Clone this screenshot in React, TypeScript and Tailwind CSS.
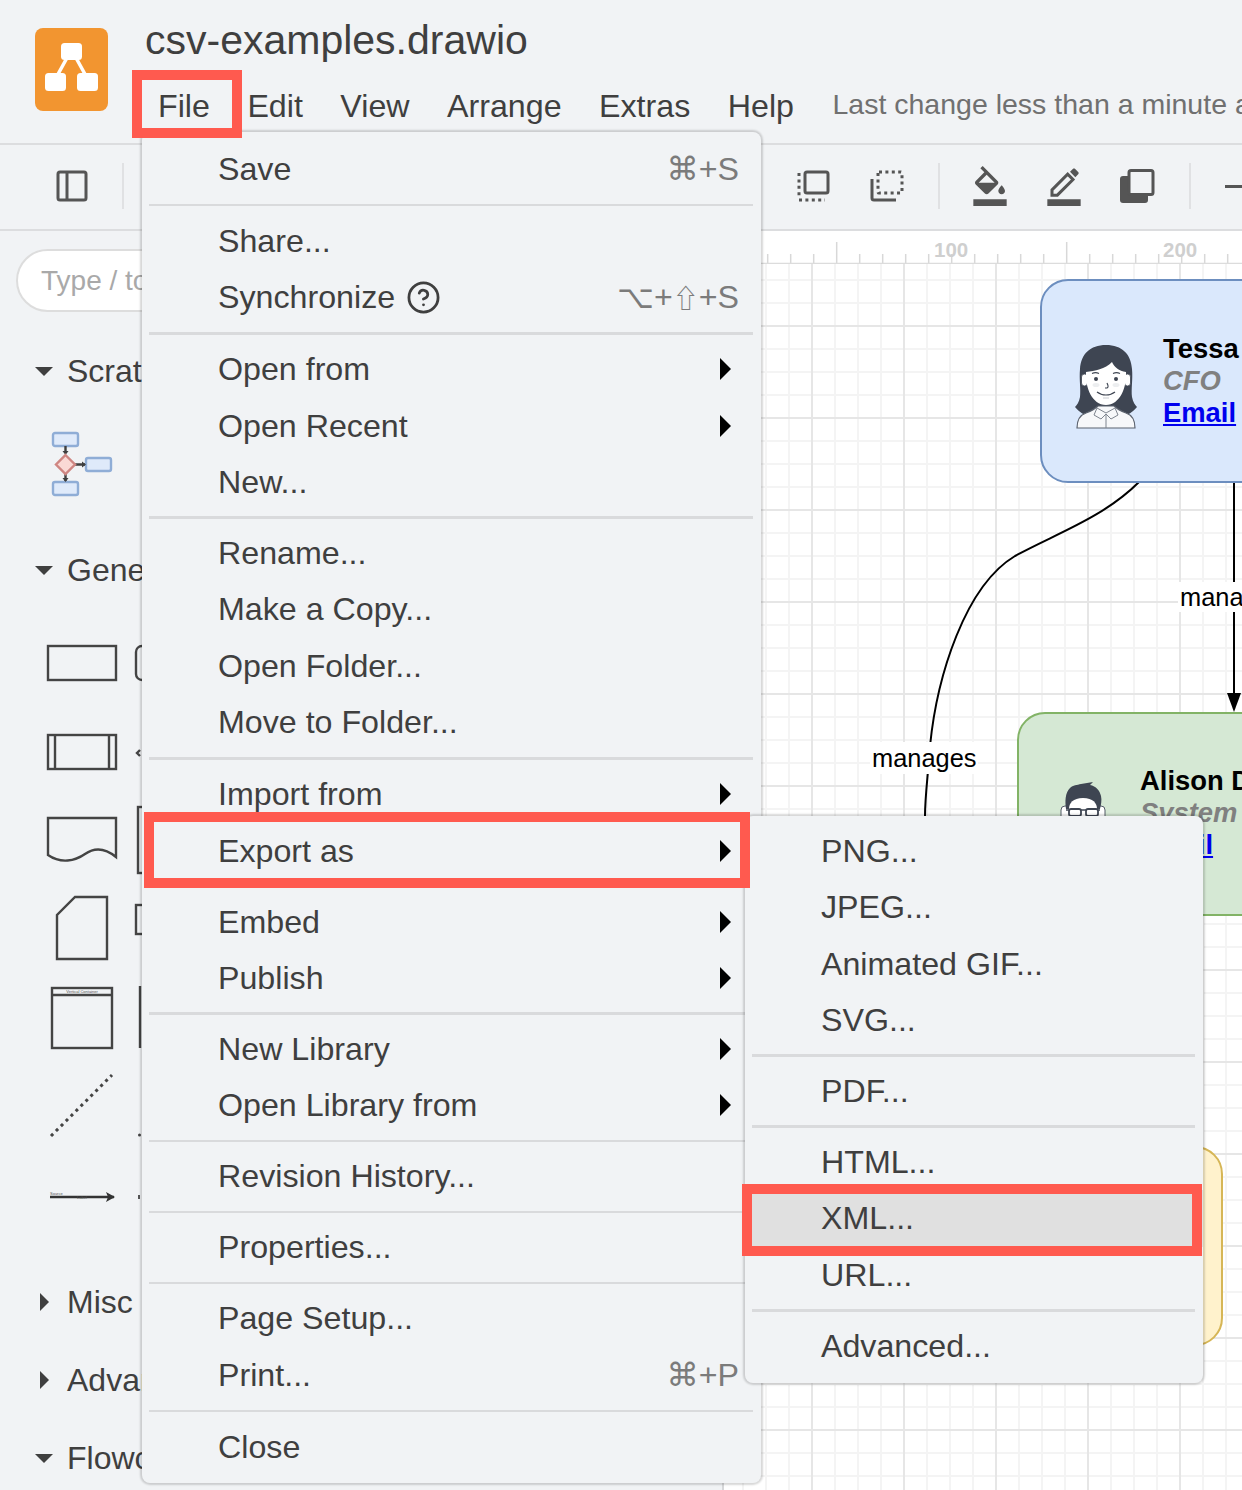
import { CircleHelp } from "lucide-react";

type Item =
  | { sep: true; tall?: boolean }
  | { label: string; arrow?: boolean; shortcut?: React.ReactNode; help?: boolean; active?: boolean };

const sep: Item = { sep: true };
const sepTall: Item = { sep: true, tall: true };

const fileMenu: Item[] = [
  { label: "Save", shortcut: "⌘+S" },
  sepTall,
  { label: "Share..." },
  {
    label: "Synchronize",
    help: true,
    shortcut: (
      <>
        ⌥+<span className="font-['Noto_Sans_CJK_JP'] text-[26px]">⇧</span>+S
      </>
    ),
  },
  sepTall,
  { label: "Open from", arrow: true },
  { label: "Open Recent", arrow: true },
  { label: "New..." },
  sep,
  { label: "Rename..." },
  { label: "Make a Copy..." },
  { label: "Open Folder..." },
  { label: "Move to Folder..." },
  sepTall,
  { label: "Import from", arrow: true },
  { label: "Export as", arrow: true },
  sep,
  { label: "Embed", arrow: true },
  { label: "Publish", arrow: true },
  sep,
  { label: "New Library", arrow: true },
  { label: "Open Library from", arrow: true },
  sep,
  { label: "Revision History..." },
  sep,
  { label: "Properties..." },
  sep,
  { label: "Page Setup..." },
  { label: "Print...", shortcut: "⌘+P" },
  sepTall,
  { label: "Close" },
];

const exportMenu: Item[] = [
  { label: "PNG..." },
  { label: "JPEG..." },
  { label: "Animated GIF..." },
  { label: "SVG..." },
  sep,
  { label: "PDF..." },
  sep,
  { label: "HTML..." },
  { label: "XML...", active: true },
  { label: "URL..." },
  sep,
  { label: "Advanced..." },
];

function MenuRows({ items }: { items: Item[] }) {
  return (
    <>
      {items.map((item, i) =>
        "sep" in item ? (
          <div key={i} className={`flex items-center pl-[7px] pr-[8px] ${item.tall ? "h-[15.6px]" : "h-[14.6px]"}`}>
            <div className="h-[2.5px] w-full bg-[#d9dadc]" />
          </div>
        ) : (
          <div
            key={i}
            className={`flex h-[56.4px] items-center pl-[76px] pr-[22px] ${item.active ? "bg-[#e0e0e0]" : ""}`}
          >
            <span>{item.label}</span>
            {item.help && <CircleHelp className="ml-[11px] text-[#3f3f3f]" size={35} strokeWidth={1.9} />}
            {item.shortcut && <span className="ml-auto text-[#7b7b7b]">{item.shortcut}</span>}
            {item.arrow && (
              <span className="ml-auto mr-[8px] h-0 w-0 border-y-[11px] border-l-[11px] border-y-transparent border-l-black" />
            )}
          </div>
        ),
      )}
    </>
  );
}

function Logo() {
  return (
    <svg viewBox="0 0 73 83" className="h-[83px] w-[73px]">
      <rect width="73" height="83" rx="8" fill="#f29530" />
      <path d="M33 28 22 48M40 28l11 20" stroke="#fff" strokeWidth="3.5" />
      <rect x="26" y="15" width="21" height="17" rx="3.5" fill="#fff" />
      <rect x="10" y="45" width="21" height="18" rx="3.5" fill="#fff" />
      <rect x="42" y="45" width="21" height="18" rx="3.5" fill="#fff" />
    </svg>
  );
}

function ToolSep({ className }: { className: string }) {
  return <div className={`h-[46px] w-[2px] bg-[#e0e1e3] ${className}`} />;
}

function Toolbar() {
  return (
    <div className="flex h-[86px] items-center overflow-hidden border-b-2 border-[#dcdddf] pb-[2px] pl-[56px]">
      <svg viewBox="0 0 32 32" className="h-[32px] w-[32px] shrink-0" fill="none" stroke="#555" strokeWidth="3">
        <rect x="2" y="2" width="28" height="28" rx="2" />
        <path d="M11 2v28" />
      </svg>
      <ToolSep className="ml-[34px] shrink-0" />
      <svg viewBox="0 0 34 34" className="ml-[673px] h-[34px] w-[34px] shrink-0" fill="none" stroke="#555" strokeWidth="3">
        <rect x="8" y="3" width="23" height="21" rx="2" />
        <path d="M2 4v24M2 31h26" strokeDasharray="3 3.4" />
      </svg>
      <svg viewBox="0 0 34 34" className="ml-[39px] h-[34px] w-[34px] shrink-0" fill="none" stroke="#555" strokeWidth="3">
        <rect x="8" y="3" width="24" height="21" rx="1" strokeDasharray="3 3.4" />
        <path d="M2 10v19a2 2 0 0 0 2 2h22" />
      </svg>
      <ToolSep className="ml-[34px] shrink-0" />
      <svg viewBox="0 0 24 24" className="ml-[30px] h-[40px] w-[40px] shrink-0" fill="#555">
        <path d="M16.56 8.94L7.62 0 6.21 1.41l2.38 2.38-5.15 5.15c-.59.59-.59 1.54 0 2.12l5.5 5.5c.29.29.68.44 1.06.44s.77-.15 1.06-.44l5.5-5.5c.59-.58.59-1.53 0-2.12zM5.21 10L10 5.21 14.79 10H5.21zM19 11.5s-2 2.17-2 3.5c0 1.1.9 2 2 2s2-.9 2-2c0-1.33-2-3.5-2-3.5zM2 20h20v4H2z" />
      </svg>
      <svg viewBox="0 0 24 24" className="ml-[34px] h-[40px] w-[40px] shrink-0" fill="#555">
        <path d="M2 20h20v4H2z" />
        <path d="M4.8 17.5v-3.2l9.4-9.4 3.2 3.2-9.4 9.4z" fill="none" stroke="#555" strokeWidth="1.8" />
        <path d="M15.6 3.5l1.7-1.7c.4-.4 1-.4 1.4 0l1.8 1.8c.4.4.4 1 0 1.4l-1.7 1.7z" />
      </svg>
      <svg viewBox="0 0 36 36" className="ml-[35px] h-[36px] w-[36px] shrink-0">
        <rect x="1" y="8" width="28" height="27" rx="3" fill="#555" />
        <rect x="10" y="2.5" width="24" height="24" rx="2" fill="#f1f3f5" stroke="#555" strokeWidth="3" />
      </svg>
      <ToolSep className="ml-[34px] shrink-0" />
      <div className="ml-[34px] h-[3px] w-[30px] shrink-0 bg-[#555]" />
    </div>
  );
}

function SectionHeader({ label, open, className }: { label: string; open?: boolean; className: string }) {
  return (
    <div className={`flex h-[38px] items-center whitespace-nowrap text-[32px] ${className}`}>
      {open ? (
        <span className="ml-[35px] mr-[14px] h-0 w-0 border-x-[9px] border-t-[9px] border-x-transparent border-t-[#3f3f3f]" />
      ) : (
        <span className="ml-[40px] mr-[18px] h-0 w-0 border-y-[9px] border-l-[9px] border-y-transparent border-l-[#3f3f3f]" />
      )}
      <span>{label}</span>
    </div>
  );
}

function ScratchIcon() {
  return (
    <svg viewBox="0 0 62 66" className="ml-[51px] mt-[41px] h-[66px] w-[62px]">
      <g fill="#dfeafa" stroke="#8fadd6" strokeWidth="2.4">
        <rect x="2" y="2" width="25" height="13" rx="2" />
        <rect x="35" y="27" width="25" height="13" rx="2" />
        <rect x="2" y="51" width="25" height="13" rx="2" />
      </g>
      <path d="M14.5 15v6M14.5 42v8M24 33.5h10" stroke="#3f3f3f" strokeWidth="2.4" />
      <path d="M11.5 20h6l-3 4zM11.5 47h6l-3 4zM31 30.5v6l4-3z" fill="#3f3f3f" />
      <path d="M14.5 24l9.5 9.5-9.5 9.5L5 33.5z" fill="#fad9d5" stroke="#cf8682" strokeWidth="2.4" />
    </svg>
  );
}

function ShapeRows() {
  const s = { fill: "none", stroke: "#444", strokeWidth: 2.4 };
  return (
    <div className="ml-[40px] mt-[30px] flex flex-col">
      <svg viewBox="0 0 110 89" className="h-[89px] w-[110px]">
        <rect x="8" y="27" width="68" height="34" {...s} />
        <rect x="96" y="27" width="60" height="34" rx="6" {...s} />
      </svg>
      <svg viewBox="0 0 110 89" className="h-[89px] w-[110px]">
        <rect x="8" y="27" width="68" height="34" {...s} />
        <path d="M15 27v34M69 27v34" {...s} />
        <path d="M100 42l-3 3 3 3" {...s} />
      </svg>
      <svg viewBox="0 0 110 89" className="h-[89px] w-[110px]">
        <path d="M8 21h68v39c-11-9-21-10-31-3s-24 10-37 1z" {...s} />
        <rect x="98" y="10" width="40" height="66" {...s} />
      </svg>
      <svg viewBox="0 0 110 89" className="h-[89px] w-[110px]">
        <path d="M35 11h32v62H17V29z" {...s} />
        <rect x="96" y="19" width="40" height="29" {...s} />
      </svg>
      <svg viewBox="0 0 110 89" className="h-[89px] w-[110px]">
        <rect x="12" y="13" width="60" height="60" {...s} />
        <path d="M12 20h60" {...s} />
        <text x="42" y="18" fontSize="4" textAnchor="middle" fill="#555">Vertical Container</text>
        <path d="M100 11v62" {...s} />
      </svg>
      <svg viewBox="0 0 110 89" className="h-[89px] w-[110px]">
        <path d="M11 72 72 11" fill="none" stroke="#444" strokeWidth="3" strokeDasharray="3 4" />
        <circle cx="99.5" cy="71" r="1.5" fill="#444" />
      </svg>
      <svg viewBox="0 0 110 89" className="h-[89px] w-[110px]">
        <path d="M10 44h64" stroke="#333" strokeWidth="2.4" />
        <path d="M66 39l9 5-9 5 2-5z" fill="#333" />
        <text x="10" y="42" fontSize="4" fill="#555">Source</text>
        <text x="37" y="46" fontSize="4" fill="#555">Label</text>
        <path d="M99 42v4" stroke="#555" strokeWidth="2" />
      </svg>
    </div>
  );
}

function Sidebar() {
  return (
    <div className="w-[724px] shrink-0 overflow-hidden border-r-2 border-[#d6d7d9]">
      <div className="ml-[16px] mt-[18px] flex h-[63px] w-[220px] items-center whitespace-nowrap rounded-full border-2 border-[#dddddd] bg-white pl-[23px] text-[28px] text-[#a9a9a9]">
        Type / to search
      </div>
      <SectionHeader label="Scratchpad" open className="mt-[40px]" />
      <ScratchIcon />
      <SectionHeader label="General" open className="mt-[54px]" />
      <ShapeRows />
      <SectionHeader label="Misc" className="mt-[41px]" />
      <SectionHeader label="Advanced" className="mt-[40px]" />
      <SectionHeader label="Flowchart" open className="mt-[40px]" />
    </div>
  );
}

function Ruler() {
  const ticks = Array.from({ length: 22 }, (_, i) => 43.7 + i * 23);
  return (
    <svg viewBox="0 0 518 33" className="h-[33px] w-full shrink-0 bg-white">
      {ticks.map((x, i) => (
        <path key={i} d={`M${x} ${i === 3 || i === 13 ? 11 : 23}V33`} stroke="#d8d8d8" strokeWidth="1.5" />
      ))}
      <path d="M0 32.5h518" stroke="#dcdcdc" strokeWidth="1.5" />
      <text x="210" y="26" fontSize="20.5" fontWeight="700" fill="#cfcfcf" fontFamily="Liberation Sans">100</text>
      <text x="439" y="26" fontSize="20.5" fontWeight="700" fill="#cfcfcf" fontFamily="Liberation Sans">200</text>
    </svg>
  );
}

function WomanAvatar() {
  return (
    <svg viewBox="0 0 62 84" className="absolute left-[33px] top-[64px] h-[84px] w-[62px]">
      <path d="M31 0C15 0 6 9 5 24c-1 10 1 20 0 28-1 5-3 8-5 10 4 5 10 9 16 9h30c6 0 12-4 16-9-2-2-4-5-5-10-1-8 1-18 0-28C56 9 47 0 31 0z" fill="#3e4552" />
      <path d="M2 83c0-9 3-13 9-15 5-2 9-4 12-7h16c3 3 7 5 12 7 6 2 9 6 9 15z" fill="#f7f8fa" stroke="#5b626e" strokeWidth="1.2" />
      <rect x="6.5" y="29" width="6" height="12" rx="3" fill="#fff" stroke="#3e4552" strokeWidth="0.8" />
      <rect x="49.5" y="29" width="6" height="12" rx="3" fill="#fff" stroke="#3e4552" strokeWidth="0.8" />
      <path d="M11 27c9-1 19-3 26-10 2 5 7 9 14 10 1 15-6 33-20 33S10 42 11 27z" fill="#fff" />
      <circle cx="21" cy="34" r="2" fill="#3e4552" />
      <circle cx="41" cy="34" r="2" fill="#3e4552" />
      <path d="M17 28.5c2-1 5-1 7 0M38 28.5c2-1 5-1 7 0" fill="none" stroke="#3e4552" strokeWidth="1.1" />
      <ellipse cx="21" cy="40" rx="3.5" ry="2" fill="#eceef0" />
      <ellipse cx="41" cy="40" rx="3.5" ry="2" fill="#eceef0" />
      <path d="M32 38c1 2 2 4 0 5h-2M22 47c5 4 13 4 18 0" fill="none" stroke="#3e4552" strokeWidth="1.2" />
      <path d="M28 53h6" stroke="#c9ccd1" strokeWidth="1" />
      <path d="M22 63l9 5 9-5 3 7-7 4-5-5-5 5-7-4zM31 69v14" fill="#f7f8fa" stroke="#7f858f" strokeWidth="1" />
    </svg>
  );
}

function ManAvatar() {
  return (
    <svg viewBox="0 0 46 46" className="absolute left-[41px] top-[61px] h-[46px] w-[46px]">
      <rect x="1" y="31" width="44" height="15" rx="4" fill="#fff" stroke="#555c68" strokeWidth="1" />
      <path d="M6 34c-1-8-1-16 4-21 3-3 7-3 11-4l12-2-3 3c6 1 10 6 11 11 1 4 0 9-1 13h-34z" fill="#3e4552" />
      <path d="M9 34c0-6 4-11 14-11s14 5 14 11v12H9z" fill="#fff" />
      <path d="M6 35h34" stroke="#3e4552" strokeWidth="1.6" />
      <rect x="9" y="34" width="12" height="7" rx="2" fill="#fff" stroke="#3e4552" strokeWidth="1.8" />
      <rect x="26" y="34" width="12" height="7" rx="2" fill="#fff" stroke="#3e4552" strokeWidth="1.8" />
    </svg>
  );
}

function PersonNode({
  name,
  role,
  className,
  textClass,
  children,
}: {
  name: string;
  role: string;
  className: string;
  textClass: string;
  children: React.ReactNode;
}) {
  return (
    <div className={`absolute h-[204px] w-[400px] rounded-[28px] border-2 ${className}`}>
      {children}
      <div className={`absolute whitespace-nowrap text-[27.4px] font-bold leading-[32px] text-black ${textClass}`}>
        <div>{name}</div>
        <div className="italic text-[#808080]">{role}</div>
        <div className="text-[#0000ee] underline">Email</div>
      </div>
    </div>
  );
}

function Canvas() {
  return (
    <div className="relative flex min-w-0 flex-1 flex-col overflow-hidden bg-white">
      <Ruler />
      <div className="flex-1 bg-[linear-gradient(#e6e6e6_2px,transparent_2px),linear-gradient(90deg,#e6e6e6_2px,transparent_2px),linear-gradient(#f4f4f4_2px,transparent_2px),linear-gradient(90deg,#f4f4f4_2px,transparent_2px)] bg-[size:92px_92px,92px_92px,23px_23px,23px_23px] bg-[position:87px_61px]" />
      <svg viewBox="0 0 518 1260" className="absolute left-0 top-0 h-[1260px] w-[518px]">
        <path
          d="M415 251c-36 36-84 52-124 74-50 30-78 120-85 190-2 30-5 50-5 70"
          fill="none"
          stroke="#000"
          strokeWidth="2"
        />
        <path d="M510 251v215" stroke="#000" strokeWidth="2" />
        <path d="M503 462l7 19 7-19z" fill="#000" />
      </svg>
      <div className="absolute left-[146px] top-[511px] bg-white px-[2px] text-[25.4px] leading-[32px] text-black">manages</div>
      <div className="absolute left-[454px] top-[351px] whitespace-nowrap bg-white px-[2px] text-[25.4px] leading-[30px] text-black">manages</div>
      <PersonNode
        name="Tessa Miller"
        role="CFO"
        className="left-[316px] top-[48px] border-[#6c8ebf] bg-[#dae8fc]"
        textClass="left-[121px] top-[52px]"
      >
        <WomanAvatar />
      </PersonNode>
      <PersonNode
        name="Alison Donovan"
        role="System Admin"
        className="left-[293px] top-[481px] border-[#82b366] bg-[#d5e8d4]"
        textClass="left-[121px] top-[51px]"
      >
        <ManAvatar />
      </PersonNode>
      <div className="absolute left-[216px] top-[915px] h-[200px] w-[283px] rounded-[28px] border-2 border-[#d6b656] bg-[#fff2cc]" />
    </div>
  );
}

export default function App() {
  return (
    <div className="relative h-[1490px] w-[1242px] overflow-hidden bg-[#f1f3f5] font-['Liberation_Sans','DejaVu_Sans',sans-serif] text-[#3f3f3f]">
      <div className="flex h-[145px] border-b-2 border-[#dcdddf]">
        <div className="ml-[35px] mt-[28px] shrink-0">
          <Logo />
        </div>
        <div className="ml-[37px] min-w-0 flex-1 pt-[16px]">
          <div className="h-[48px] text-[41px] leading-[48px]">csv-examples.drawio</div>
          <div className="mt-[18px] flex h-[48px] items-center gap-[37.5px] whitespace-nowrap pl-[13px] text-[32.2px]">
            <span>File</span>
            <span>Edit</span>
            <span>View</span>
            <span>Arrange</span>
            <span>Extras</span>
            <span>Help</span>
            <span className="pb-[3px] pl-[1px] text-[28.5px] text-[#707070]">Last change less than a minute ago</span>
          </div>
        </div>
      </div>
      <Toolbar />
      <div className="flex h-[1259px]">
        <Sidebar />
        <Canvas />
      </div>

      {/* File menu */}
      <div className="absolute left-[142px] top-[132px] h-[1351px] w-[619px] rounded-[8px] bg-[#f1f3f5] pt-[8.8px] text-[32.2px] shadow-[0_0_2px_2px_rgba(0,0,0,0.16)]">
        <MenuRows items={fileMenu} />
      </div>

      {/* Export submenu */}
      <div className="absolute left-[745px] top-[816px] h-[567px] w-[458px] rounded-[8px] bg-[#f1f3f5] pt-[6.8px] text-[32.2px] shadow-[0_0_2px_2px_rgba(0,0,0,0.16)]">
        <MenuRows items={exportMenu} />
      </div>

      {/* Red callouts */}
      <div className="absolute left-[132px] top-[70px] h-[68px] w-[110px] border-[10px] border-[#ff5a4f]" />
      <div className="absolute left-[144px] top-[812px] h-[76px] w-[606px] border-[10px] border-[#ff5a4f]" />
      <div className="absolute left-[742px] top-[1184px] h-[72px] w-[460px] border-[10px] border-[#ff5a4f]" />
    </div>
  );
}
